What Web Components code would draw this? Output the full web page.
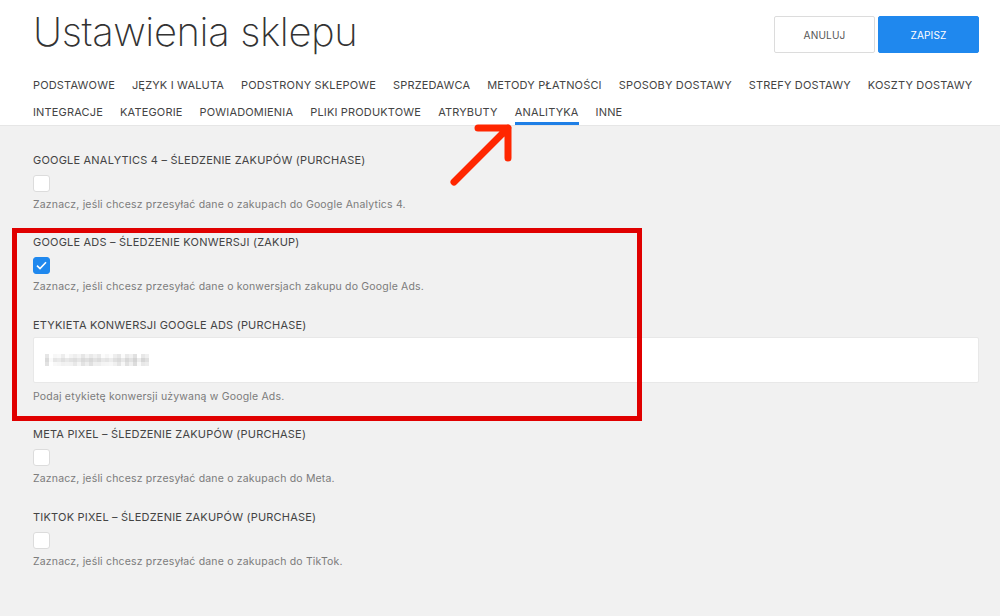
<!DOCTYPE html>
<html lang="pl">
<head>
<meta charset="utf-8">
<title>Ustawienia sklepu</title>
<style>
    html, body { margin: 0; padding: 0; background: #f1f1f1; }
    body { width: 1000px; height: 616px; overflow: hidden; position: relative; font-family: Inter, "Liberation Sans", sans-serif; }
</style>
</head>
<body>
<shop-header>
    <span slot="title">Ustawienia sklepu</span>
    <shop-button slot="actions">ANULUJ</shop-button>
    <shop-button slot="actions" primary>ZAPISZ</shop-button>
    <shop-tab slot="tabs">PODSTAWOWE</shop-tab>
    <shop-tab slot="tabs">JĘZYK I WALUTA</shop-tab>
    <shop-tab slot="tabs">PODSTRONY SKLEPOWE</shop-tab>
    <shop-tab slot="tabs">SPRZEDAWCA</shop-tab>
    <shop-tab slot="tabs">METODY PŁATNOŚCI</shop-tab>
    <shop-tab slot="tabs">SPOSOBY DOSTAWY</shop-tab>
    <shop-tab slot="tabs">STREFY DOSTAWY</shop-tab>
    <shop-tab slot="tabs">KOSZTY DOSTAWY</shop-tab>
    <shop-tab slot="tabs">INTEGRACJE</shop-tab>
    <shop-tab slot="tabs">KATEGORIE</shop-tab>
    <shop-tab slot="tabs">POWIADOMIENIA</shop-tab>
    <shop-tab slot="tabs">PLIKI PRODUKTOWE</shop-tab>
    <shop-tab slot="tabs">ATRYBUTY</shop-tab>
    <shop-tab slot="tabs" active>ANALITYKA</shop-tab>
    <shop-tab slot="tabs">INNE</shop-tab>
</shop-header>
<settings-form>
    <setting-field label="GOOGLE ANALYTICS 4 – ŚLEDZENIE ZAKUPÓW (PURCHASE)" hint="Zaznacz, jeśli chcesz przesyłać dane o zakupach do Google Analytics 4."><check-box></check-box></setting-field>
    <setting-field label="GOOGLE ADS – ŚLEDZENIE KONWERSJI (ZAKUP)" hint="Zaznacz, jeśli chcesz przesyłać dane o konwersjach zakupu do Google Ads."><check-box checked></check-box></setting-field>
    <setting-field label="ETYKIETA KONWERSJI GOOGLE ADS (PURCHASE)" hint="Podaj etykietę konwersji używaną w Google Ads."><blurred-input></blurred-input></setting-field>
    <setting-field label="META PIXEL – ŚLEDZENIE ZAKUPÓW (PURCHASE)" hint="Zaznacz, jeśli chcesz przesyłać dane o zakupach do Meta."><check-box></check-box></setting-field>
    <setting-field label="TIKTOK PIXEL – ŚLEDZENIE ZAKUPÓW (PURCHASE)" hint="Zaznacz, jeśli chcesz przesyłać dane o zakupach do TikTok."><check-box></check-box></setting-field>
</settings-form>
<red-annotations></red-annotations>

<script>
class ShopHeader extends HTMLElement {
    constructor() {
        super();
        this.attachShadow({ mode: 'open' });
        this.shadowRoot.innerHTML = `
        <style>
            :host { display: block; background: #fff; border-bottom: 1px solid #e6e6e6; height: 126px; box-sizing: border-box; padding: 0 21px 0 33px; }
            .top { display: flex; justify-content: space-between; height: 70px; }
            h1 { margin: 8px 0 0; font: 200 40px/47px Inter, sans-serif; color: #333; letter-spacing: -0.4px; }
            .actions { display: flex; gap: 3px; padding-top: 16px; align-items: flex-start; }
            .tabs { display: flex; flex-wrap: wrap; column-gap: 17px; }
        </style>
        <div class="top">
            <h1><slot name="title"></slot></h1>
            <div class="actions"><slot name="actions"></slot></div>
        </div>
        <div class="tabs"><slot name="tabs"></slot></div>`;
    }
}
customElements.define('shop-header', ShopHeader);

class ShopButton extends HTMLElement {
    constructor() {
        super();
        this.attachShadow({ mode: 'open' });
        this.shadowRoot.innerHTML = `
        <style>
            :host { display: flex; align-items: center; justify-content: center; box-sizing: border-box; width: 101px; height: 37px; border-radius: 2px; font-size: 10.1px; letter-spacing: 0.15px; background: #fff; border: 1px solid #dcdcdc; color: #555; }
            :host([primary]) { background: #1f88ee; border-color: #1f88ee; color: #fff; }
        </style>
        <slot></slot>`;
    }
}
customElements.define('shop-button', ShopButton);

class ShopTab extends HTMLElement {
    constructor() {
        super();
        this.attachShadow({ mode: 'open' });
        this.shadowRoot.innerHTML = `
        <style>
            :host { display: block; box-sizing: border-box; height: 27px; padding-top: 8px; font-size: 11px; line-height: 14px; letter-spacing: 0.165px; color: #444; white-space: nowrap; }
            :host([active]) { border-bottom: 3px solid #1f7fe6; height: 28px; }
        </style>
        <slot></slot>`;
    }
}
customElements.define('shop-tab', ShopTab);

class SettingsForm extends HTMLElement {
    constructor() {
        super();
        this.attachShadow({ mode: 'open' });
        this.shadowRoot.innerHTML = `
        <style>
            :host { display: block; padding: 26.8px 21px 0 33px; }
        </style>
        <slot></slot>`;
    }
}
customElements.define('settings-form', SettingsForm);

class SettingField extends HTMLElement {
    constructor() {
        super();
        this.attachShadow({ mode: 'open' });
        this.shadowRoot.innerHTML = `
        <style>
            :host { display: block; margin-bottom: 23.5px; }
            label { display: block; font-size: 11px; line-height: 14px; letter-spacing: 0.2px; color: #444; margin-bottom: 8px; }
            p { margin: 6px 0 0; font-size: 10.5px; line-height: 14px; letter-spacing: 0.18px; color: #7b7b7b; }
        </style>
        <label>${this.getAttribute('label')}</label>
        <slot></slot>
        <p>${this.getAttribute('hint')}</p>`;
    }
}
customElements.define('setting-field', SettingField);

class CheckBox extends HTMLElement {
    constructor() {
        super();
        this.attachShadow({ mode: 'open' });
        this.shadowRoot.innerHTML = `
        <style>
            :host { display: flex; align-items: center; justify-content: center; box-sizing: border-box; width: 17px; height: 17px; background: #fff; border: 1px solid #dcdcdc; border-radius: 3px; }
            :host([checked]) { background: #1f88ee; border-color: #1f88ee; }
            svg { display: none; }
            :host([checked]) svg { display: block; }
        </style>
        <svg width="11" height="9" viewBox="0 0 11 9" fill="none"><path d="M1 4.6 L4 7.5 L10 1.2" stroke="#fff" stroke-width="1.6"/></svg>`;
    }
}
customElements.define('check-box', CheckBox);

// the label value is censored in the reference, so it is a mosaic and no text
class BlurredInput extends HTMLElement {
    constructor() {
        super();
        this.attachShadow({ mode: 'open' });
        const shades = [218, 250, 230, 234, 224, 232, 226, 222, 230, 218, 224, 216, 226, 220, 232, 228, 236, 224, 218, 232, 216, 226, 212, 236, 214, 224];
        const cols = shades.map((v, i) => {
            const top = Math.min(255, v + 12 + (i * 7) % 9);
            const bottom = Math.min(255, v + 8 + (i * 5) % 11);
            return `<rect x="${i * 4}" y="0" width="4" height="4" fill="rgb(${top},${top},${top})"/>`
                + `<rect x="${i * 4}" y="4" width="4" height="4" fill="rgb(${v},${v},${v})"/>`
                + `<rect x="${i * 4}" y="8" width="4" height="4" fill="rgb(${bottom},${bottom},${bottom})"/>`;
        }).join('');
        this.shadowRoot.innerHTML = `
        <style>
            :host { display: flex; align-items: center; box-sizing: border-box; height: 46px; margin: -3px 0 7px; padding-left: 11px; background: #fff; border: 1px solid #e8e8e8; border-radius: 2px; }
            svg { display: block; }
        </style>
        <svg width="104" height="12" viewBox="0 0 104 12">${cols}</svg>`;
    }
}
customElements.define('blurred-input', BlurredInput);

class RedAnnotations extends HTMLElement {
    constructor() {
        super();
        this.attachShadow({ mode: 'open' });
        this.shadowRoot.innerHTML = `
        <style>
            :host { display: block; position: absolute; inset: 0; pointer-events: none; }
            .box { position: absolute; left: 12px; top: 228px; width: 630px; height: 193px; box-sizing: border-box; border: 5px solid #e00000; }
            svg { position: absolute; left: 0; top: 0; }
        </style>
        <div class="box"></div>
        <svg width="1000" height="616" viewBox="0 0 1000 616" fill="none">
            <path d="M454 182 L508 128 M478 128 L508 128 L508 158" stroke="#ff2600" stroke-width="7" stroke-linecap="round" stroke-linejoin="round"/>
        </svg>`;
    }
}
customElements.define('red-annotations', RedAnnotations);
</script>
</body>
</html>
